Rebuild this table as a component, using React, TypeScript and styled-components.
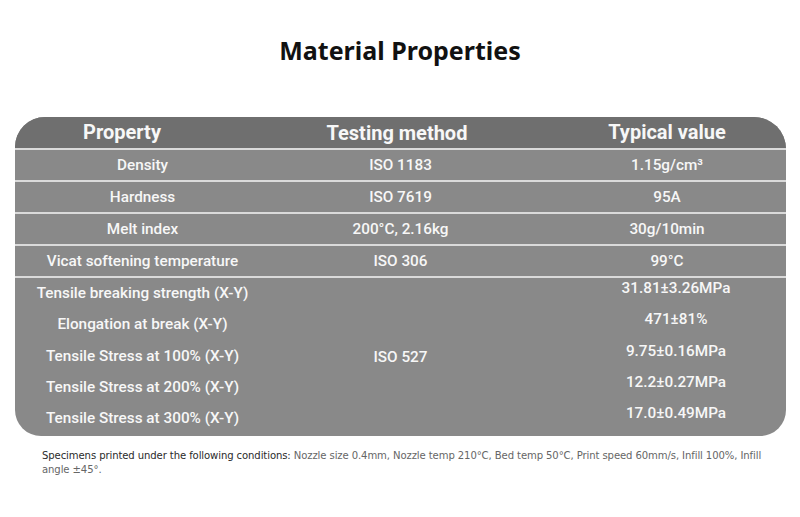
import React from "react";
import styled, { createGlobalStyle } from "styled-components";

const Global = createGlobalStyle`
  html, body { margin: 0; padding: 0; background: #ffffff; }
  body { font-family: Roboto, "Liberation Sans", sans-serif; }
`;

const Page = styled.div`
  width: 800px;
  height: 517px;
  display: flex;
  flex-direction: column;
  align-items: stretch;
`;

const Title = styled.h1`
  margin: 0;
  padding-top: 35px;
  height: 117px;
  box-sizing: border-box;
  text-align: center;
  font-family: "Noto Sans", sans-serif;
  font-weight: 700;
  font-size: 25px;
  line-height: 30px;
  color: #111111;
`;

const Table = styled.div`
  margin: 0 14px 0 15px;
  background: #898989;
  border-radius: 30px 32px 26px 26px;
  overflow: hidden;
  color: #f7f7f7;
`;

const Row = styled.div<{ $head?: boolean }>`
  display: grid;
  grid-template-columns: 255px 261px 1fr;
  height: ${(p) => (p.$head ? 31 : 30)}px;
  background: ${(p) => (p.$head ? "#6f6f6f" : "#898989")};
  border-bottom: 2px solid #dadada;
  align-items: center;
  font-size: ${(p) => (p.$head ? 20 : 15.3)}px;
  font-weight: ${(p) => (p.$head ? 700 : 500)};
`;

const Cell = styled.div<{ $l?: number; $r?: number; $dy?: number }>`
  text-align: center;
  white-space: nowrap;
  padding-left: ${(p) => p.$l ?? 0}px;
  padding-right: ${(p) => p.$r ?? 0}px;
  margin-top: ${(p) => (p.$dy ?? 0) * 2}px;
`;

const Block = styled.div`
  display: grid;
  grid-template-columns: 255px 261px 1fr;
  height: 158px;
  align-items: center;
  font-size: 15.3px;
  font-weight: 500;
`;

const Lines = styled.div<{ $lift?: number; $l?: number }>`
  display: flex;
  flex-direction: column;
  align-self: start;
  margin-top: ${(p) => -(p.$lift ?? 0)}px;
  padding-left: ${(p) => p.$l ?? 0}px;
`;

const Line = styled.div`
  height: 31.25px;
  line-height: 31.25px;
  text-align: center;
  white-space: nowrap;
`;

const Note = styled.p`
  margin: 13px 30px 0 42px;
  font-family: "Liberation Sans Narrow", "DejaVu Sans Condensed", "Liberation Sans", sans-serif;
  font-size: 11.2px;
  line-height: 14px;
  color: #666666;
  letter-spacing: -0.1px;
`;

const Strong = styled.span`
  color: #2a2a2a;
`;

const simple: [string, string, string][] = [
  ["Density", "ISO 1183", "1.15g/cm³"],
  ["Hardness", "ISO 7619", "95A"],
  ["Melt index", "200°C, 2.16kg", "30g/10min"],
  ["Vicat softening temperature", "ISO 306", "99°C"],
];

const tensile: [string, string][] = [
  ["Tensile breaking strength (X-Y)", "31.81±3.26MPa"],
  ["Elongation at break (X-Y)", "471±81%"],
  ["Tensile Stress at 100% (X-Y)", "9.75±0.16MPa"],
  ["Tensile Stress at 200% (X-Y)", "12.2±0.27MPa"],
  ["Tensile Stress at 300% (X-Y)", "17.0±0.49MPa"],
];

export default function App() {
  return (
    <Page>
      <Global />
      <Title>Material Properties</Title>
      <Table>
        <Row $head>
          <Cell $r={41} $dy={-0.5}>Property</Cell>
          <Cell $r={7} $dy={0.5}>Testing method</Cell>
          <Cell $l={17} $dy={-1}>Typical value</Cell>
        </Row>
        {simple.map(([a, b, c]) => (
          <Row key={a}>
            <Cell>{a}</Cell>
            <Cell>{b}</Cell>
            <Cell $l={17}>{c}</Cell>
          </Row>
        ))}
        <Block>
          <Lines>
            {tensile.map(([a]) => (
              <Line key={a}>{a}</Line>
            ))}
          </Lines>
          <Cell>ISO 527</Cell>
          <Lines $lift={5} $l={35}>
            {tensile.map(([a, v]) => (
              <Line key={a}>{v}</Line>
            ))}
          </Lines>
        </Block>
      </Table>
      <Note>
        <Strong>Specimens printed under the following conditions:</Strong> Nozzle size 0.4mm, Nozzle temp 210°C, Bed temp 50°C, Print speed 60mm/s, Infill 100%, Infill angle ±45°.
      </Note>
    </Page>
  );
}
